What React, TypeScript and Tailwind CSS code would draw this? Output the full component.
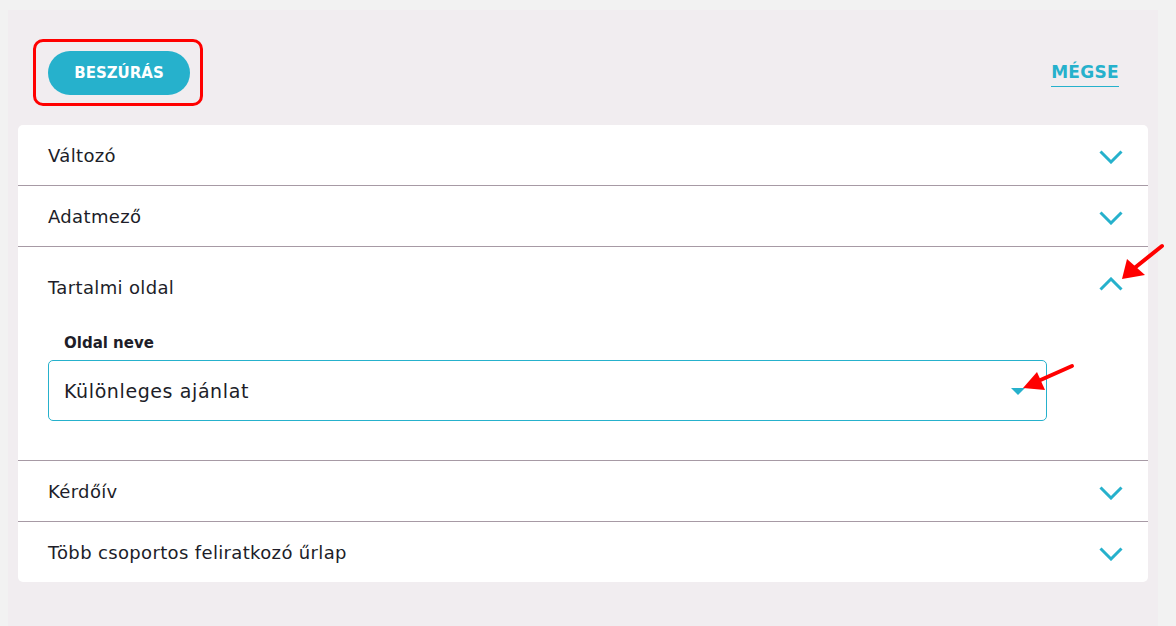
import React, { useState } from 'react';

const TEAL = '#26b1cc';

const Chevron = ({ up = false }: { up?: boolean }) => (
  <svg width="24" height="14" viewBox="0 0 24 14" className="shrink-0">
    <polyline
      points={up ? '1.5,12.5 12,2 22.5,12.5' : '1.5,1.5 12,12 22.5,1.5'}
      fill="none"
      stroke={TEAL}
      strokeWidth="3"
    />
  </svg>
);

const sections = ['Változó', 'Adatmező', 'Tartalmi oldal', 'Kérdőív', 'Több csoportos feliratkozó űrlap'];

export default function App() {
  const [open, setOpen] = useState(2);

  return (
    <div className="min-h-screen bg-[#f2f2f2] pt-[10px] pl-[8px] pr-[18px]" style={{ fontFamily: '"DejaVu Sans", "Open Sans", sans-serif' }}>
      <div className="relative min-h-[616px] bg-[#f1edf0] px-[10px]">
        {/* Header */}
        <div className="flex items-start justify-between pl-[15px] pr-[29px] pt-[29px] pb-[19px]">
          <div className="rounded-[10px] border-[3px] border-[#ff0000] pl-[12px] pr-[10px] pt-[9px] pb-[8px]">
            <button className="h-[44px] w-[142px] rounded-full bg-[#26b1cc] text-[15px] font-bold text-white">
              BESZÚRÁS
            </button>
          </div>
          <button className="mt-[22px] border-b-[1.5px] border-[#26b1cc] pb-[3px] text-[17px] font-bold leading-[22px] tracking-[0.3px] text-[#26b1cc]">
            MÉGSE
          </button>
        </div>

        {/* Accordion card */}
        <div className="rounded-[5px] bg-white">
          {sections.map((s, i) => {
            const isOpen = open === i;
            return (
              <div key={s} className={i > 0 ? 'border-t border-[#a79aa5]' : ''}>
                <button
                  onClick={() => setOpen(isOpen ? -1 : i)}
                  className={`flex w-full items-center justify-between pl-[30px] pr-[25px] text-left ${isOpen ? 'h-[77px] pt-[4px]' : 'h-[60px] pt-[1px]'}`}
                >
                  <span className="text-[18px] tracking-[0.35px] text-[#201d28]">{s}</span>
                  <span className={isOpen ? 'mt-[-8px]' : 'mt-[2px]'}>
                    <Chevron up={isOpen} />
                  </span>
                </button>
                {isOpen && (
                  <div className="pl-[30px] pr-[101px] pt-[10px] pb-[39px]">
                    <div className="pl-[16px] pt-[2px] text-[15px] font-bold leading-[15px] text-[#201d28]">Oldal neve</div>
                    <div className="mt-[9px] flex h-[61px] items-center justify-between rounded-[5px] border border-[#26b1cc] pl-[15px] pr-[21px]">
                      <span className="pt-[1px] text-[19px] tracking-[0.6px] text-[#201d28]">Különleges ajánlat</span>
                      <svg width="14" height="8" viewBox="0 0 14 8" className="mt-[3px]">
                        <polygon points="0,0 14,0 7,7" fill={TEAL} />
                      </svg>
                    </div>
                  </div>
                )}
              </div>
            );
          })}
        </div>

        {/* Annotation arrows */}
        <svg className="pointer-events-none absolute left-[-8px] top-[-10px]" width="1176" height="626">
          <line x1="1162" y1="246" x2="1132" y2="270" stroke="#ff0000" strokeWidth="4" strokeLinecap="round" />
          <polygon points="1122,279 1127,259 1145,275" fill="#ff0000" />
          <line x1="1072" y1="366" x2="1036" y2="382" stroke="#ff0000" strokeWidth="4" strokeLinecap="round" />
          <polygon points="1023,388 1037,372 1045,390" fill="#ff0000" />
        </svg>
      </div>
    </div>
  );
}
